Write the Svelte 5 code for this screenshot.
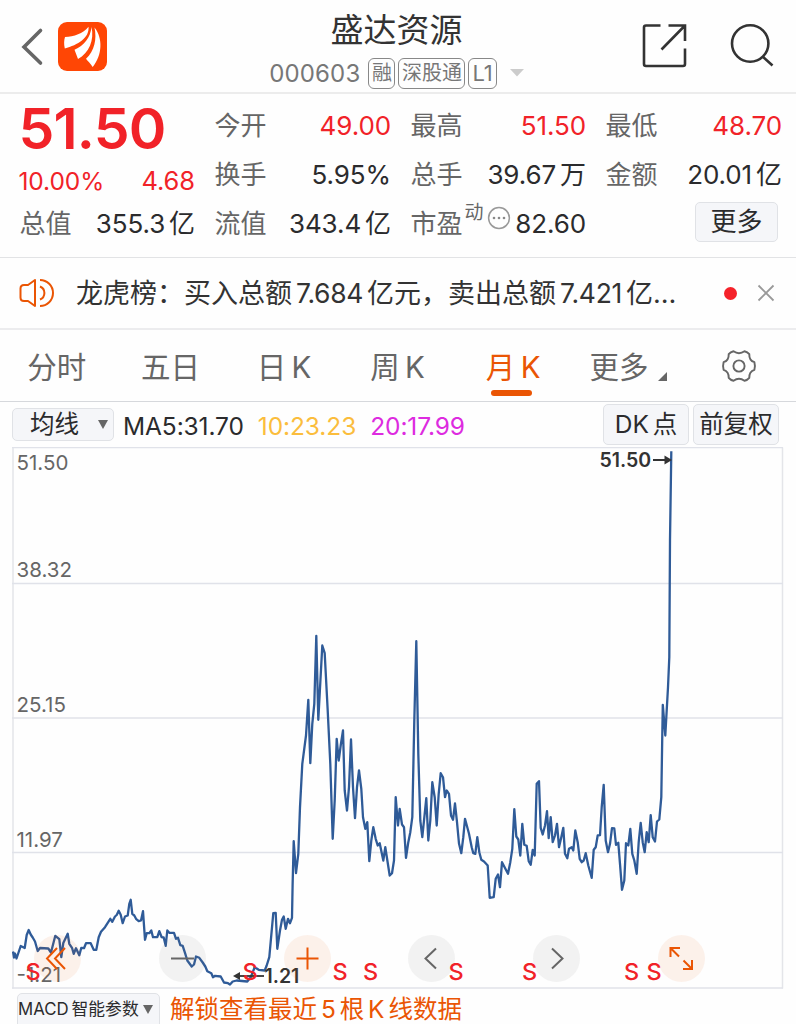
<script>
  const stats = [
    { label: '今开', value: '49.00', up: true },
    { label: '最高', value: '51.50', up: true },
    { label: '最低', value: '48.70', up: true },
    { label: '换手', value: '5.95%' },
    { label: '总手', value: '39.67', unit: '万' },
    { label: '金额', value: '20.01', unit: '亿' },
    { label: '总值', value: '355.3', unit: '亿' },
    { label: '流值', value: '343.4', unit: '亿' }
  ]

  const tabs = ['分时', '五日', '日 K', '周 K', '月 K']
  let active = $state('月 K')

  const gridLines = [
    { y: 447, label: '51.50', ty: 469 },
    { y: 583, label: '38.32', ty: 576 },
    { y: 717.5, label: '25.15', ty: 711 },
    { y: 852, label: '11.97', ty: 846 },
    { y: 987.5, label: '-1.21', ty: 981 }
  ]

  const signals = [33, 250, 340, 370.5, 456, 529.5, 631.5, 654]

  const tools = [
    { name: 'first', warm: true, d: 'M23 13 L13 23.5 L23 34 M31 13 L21 23.5 L31 34' },
    { name: 'zoom out', d: 'M12 23.5 H35' },
    { name: 'zoom in', warm: true, d: 'M12.5 23.5 H34.5 M23.5 12.5 V34.5' },
    { name: 'previous', d: 'M28 13.5 L17.5 23.5 L28 33.5' },
    { name: 'next', d: 'M19 13.5 L29.5 23.5 L19 33.5' },
    { name: 'expand', warm: true, d: 'M12.5 22 V13 H22 M13 13.5 L21 21.5 M34 25 V34 H25 M33.5 33.5 L25.5 25.5' }
  ]

  const line = `13,951 14,957 15,953 16.5,958 20.7,945.5 24.7,947.5 26.7,934.5 28.7,929.5 30.7,934 32.7,937 35,941
    37.7,950.5 40,947.5 48.3,948 51,952 53.3,943 55.3,935.3 59.3,938.7 61.3,956.5 63.3,942.5 67.7,933.3 69.3,943.3
    72,947.3 73.7,953.3 76,947.7 79.3,954.7 81.3,947.3 84,947.7 86,942.7 90.7,942.7 93.7,949.3 96.3,949.3 98.7,936.7
    101,931.3 105,926.7 110.3,918.3 112.3,921.3 115,916 116.7,914.5 118.7,910.3 120.7,914.3 122.7,922.7 125,916
    127.7,915 129.3,903.3 130.7,899.3 132.3,913.3 134.3,915 136.3,918.7 138.7,920.7 141,920 143,910.7 145,939.3
    146.7,932.7 149.3,932.7 151.3,930 153,936.7 157.3,936.7 159.3,930.7 161.7,936.7 163.7,937 165.7,945.3 167.3,930
    169.3,932.3 174,932.3 176,938.3 178,937.3 180.3,944.7 182.7,945.3 185.3,953.3 187.3,960 191.7,966 194,964
    196,956 199.3,957.3 202.7,962 205.3,966 207.3,970.7 211.3,972.7 213,976.7 215,975.3 220.7,976 224,982 228,982.7
    230,984 232.7,981 236.7,980 247.3,981 250.7,976.7 254.7,966.7 258.7,969.3 264.7,970 266.7,965 269.3,956.7
    273.3,912.7 275.7,912.3 277.3,948.3 280,930 282,919.3 283.7,916 285.7,928.3 288,918.3 290,922.7 292,917.3
    292.6,885 293.7,840.7 296,872.7 298.3,853.3 300,806.7 302.3,763.3 306,735 308.3,699.3 310.3,762.7 312.3,723.3
    314.3,703.3 316.3,635.3 318.3,719.3 322.3,645 324.7,652.7 327.7,710 330.3,763.3 332.7,838.3 334.7,800
    336.7,738.3 338.7,760 340.7,745 343,730 344.7,790 347,810 349,786.7 351,739 353,786.7 355,817.7 357,786.7
    359,770 361.3,788.3 363,816.7 365.3,828.3 367.3,821.7 369.3,860.7 371.3,840 373.3,826.7 375.7,838.3 377.7,845
    379.7,842.7 383.3,860 385.3,846.7 389.7,875 392,872.7 394,860 395.7,796.7 398,825 399.7,808.3 402,824 404,826.7
    406,857.3 408.3,841.7 410.3,831.7 412.3,816.7 414.3,720 416.3,640.7 418.3,753.3 420.3,820 422.3,836.7
    426.3,797.7 428.3,840 430.3,820 432.3,781.7 434.7,796.7 436.7,825 438.7,793.3 440.7,772.7 443,776.7 445,796.7
    446.7,790 449,793.3 451,815 453,819.3 455,803 457,821.7 459,843 461.3,852.7 463.3,836.7 465,818.3 469,833.3
    471.7,846.7 473.3,852.7 475.3,853.3 477.3,836.7 479.3,851.7 481.3,859.3 484,861 487.7,865 489.7,897.3
    493.7,896.7 495.7,878.3 498,874 500,886.7 502,861.7 508,873.3 510.3,861.7 512.3,848.3 514.3,808.7 516.3,836
    518.3,839 520.3,855 522.3,823.3 524.3,844.3 526.7,845.3 528.7,860.7 530.7,864.3 532.7,849.3 534.7,855
    536.7,783.3 539,780.7 540.7,827.3 542.7,834 545,825 547,810.7 548.7,837.7 550.7,816.7 552.7,841.7 555,835
    557,823.3 559,846.7 561.3,836.7 563.3,827.3 565,853.3 567.3,857.7 569,848.3 571.7,846.7 573.3,850 575.3,830
    577.7,841.7 579.7,858.3 581.7,861.7 583.7,860 585.7,852.7 588.3,865 591.7,877.3 593.7,849.3 595.7,846.7
    597.7,835 600,834.7 601.7,806.7 603.7,784.3 605.7,840 608,851.7 610,843.3 612,827.7 614.3,828 616,844.3
    618.3,842.3 620,863.3 622,889.3 624.3,880 626,842.7 628.3,845 630.3,828.3 632.3,853.3 634.3,860 636.7,873.3
    638.7,841.7 640.7,822.3 642.7,841.7 644.7,851.7 646.7,831.7 648.7,841.7 650.7,814.7 652.7,836.7 655,841
    657,821 659.3,819 661.3,796.7 662.2,740 662.8,704.3 665.3,735 668,686.7 669.3,656.7 670,540 671.3,450.7`
</script>

<main>
  <header>
    <div class="left">
      <svg width="24" height="40" viewBox="0 0 24 40"><path d="M20.5 4.5 L4 21 L20.5 37" fill="none" stroke="#666" stroke-width="3.6" stroke-linecap="round" /></svg>
      <svg class="logo" width="49" height="49" viewBox="0 0 49 49">
        <rect width="49" height="49" rx="9" fill="#ff4605" />
        <g fill="#fff">
          <path d="M7 15 C16 14.5 25 12 30.5 4.8 C31.5 16 20 23 6.8 26.5 C5.8 22 6 18 7 15 Z" />
          <path d="M33.5 5 C36.5 18 31 31 20 37 L16.5 27.8 C26 23.5 32.5 15.5 33.5 5 Z" />
          <path d="M36.5 5.5 C45 16 44.5 33 34.7 45 C32.5 41.5 29.5 39 28 36.8 C36.5 29 39 17 36.5 5.5 Z" />
        </g>
      </svg>
    </div>
    <div class="title">
      <h1>盛达资源</h1>
      <div class="code">
        <span class="num">000603</span>
        <i>融</i><i>深股通</i><i class="level">L1</i>
        <svg width="14" height="8" viewBox="0 0 14 8"><path d="M0 0 H14 L7 7.5 Z" fill="#ccc" /></svg>
      </div>
    </div>
    <div class="right">
      <svg width="46" height="46" viewBox="0 0 46 46" fill="none" stroke="#333" stroke-width="2.6">
        <path d="M18.5 2.5 H4 Q2 2.5 2 4.5 V41 Q2 43 4 43 H41 Q43 43 43 41 V25.5 M26.5 2.5 H43 V18 M43 2.5 L19.5 26.5" />
      </svg>
      <svg width="46" height="46" viewBox="0 0 46 46" fill="none" stroke="#333" stroke-width="2.6">
        <circle cx="20.2" cy="20.5" r="18.2" /><path d="M32.5 33.5 L42.5 42.5" />
      </svg>
    </div>
  </header>

  <section class="quote">
    <div class="price">
      <strong>51.50</strong>
      <p><span>10.00%</span><span>4.68</span></p>
    </div>
    {#each stats as s}
      <div class="stat">
        <label>{s.label}</label>
        <span class="val" class:up={s.up}>{s.value}{#if s.unit}<b>{s.unit}</b>{/if}</span>
      </div>
    {/each}
    <div class="stat">
      <label>市盈</label>
      <small>动</small>
      <svg class="dots" width="24" height="24" viewBox="0 0 24 24"><circle cx="12" cy="12" r="10.4" fill="none" stroke="#999" stroke-width="1.5" /><g fill="#888"><circle cx="7" cy="12" r="1.3" /><circle cx="12" cy="12" r="1.3" /><circle cx="17" cy="12" r="1.3" /></g></svg>
      <span class="val">82.60</span>
    </div>
    <button class="more">更多</button>
  </section>

  <section class="news">
    <svg width="36" height="32" viewBox="0 0 36 32" fill="none" stroke="#ea5504" stroke-width="2">
      <path d="M16 3 L9 8 H5 Q1.5 8 1.5 11.5 V20.5 Q1.5 24 5 24 H9 L16 29 Z" stroke-linejoin="round" />
      <path d="M21 9.5 A7 7 0 0 1 21 22.5 M21 3 A13 13 0 0 1 21 29" />
    </svg>
    <p>龙虎榜：买入总额<b>7.684</b>亿元，卖出总额<b>7.421</b>亿…</p>
    <span class="dot"></span>
    <svg width="18" height="18" viewBox="0 0 18 18"><path d="M1.5 1.5 L16.5 16.5 M16.5 1.5 L1.5 16.5" stroke="#999" stroke-width="1.8" /></svg>
  </section>

  <nav>
    {#each tabs as tab}
      <button class="tab" class:active={tab === active} onclick={() => (active = tab)}>{tab}</button>
    {/each}
    <button class="tab wide">更多<svg width="9" height="9" viewBox="0 0 9 9"><path d="M9 0 V9 H0 Z" fill="#666" /></svg></button>
    <svg class="gear" width="36" height="34" viewBox="-18 -17 36 34" fill="none" stroke="#666" stroke-width="1.9">
      <path d="M-5.5 -14.7 Q0 -10.8 5.5 -14.7 Q8.5 -14 10.3 -11.8 Q10 -5.6 15.4 -3.8 Q16.5 0 15.4 3.8 Q10 5.6 10.3 11.8 Q8.5 14 5.5 14.7 Q0 10.8 -5.5 14.7 Q-8.5 14 -10.3 11.8 Q-10 5.6 -15.4 3.8 Q-16.5 0 -15.4 -3.8 Q-10 -5.6 -10.3 -11.8 Q-8.5 -14 -5.5 -14.7 Z" stroke-linejoin="round" />
      <circle r="5.6" />
    </svg>
  </nav>

  <div class="averages">
    <button class="select">均线<svg width="10" height="9" viewBox="0 0 10 9"><path d="M0 0 H10 L5 9 Z" fill="#666" /></svg></button>
    <span class="ma5">MA5:31.70</span>
    <span class="ma10">10:23.23</span>
    <span class="ma20">20:17.99</span>
    <button class="dk">DK 点</button>
    <button class="fq">前复权</button>
  </div>

  <div class="chart">
    <svg width="772" height="542" viewBox="12 446.5 772 542">
      <path d="M13 447 V988 M782.5 447 V988" stroke="#e4e5e9" stroke-width="1.5" />
      {#each gridLines as g}
        <line x1="12" x2="783" y1={g.y} y2={g.y} stroke="#e0e2e9" stroke-width="1.7" />
        <text class="axis" x="16.5" y={g.ty}>{g.label}</text>
      {/each}
      <polyline points={line} fill="none" stroke="#2f5b98" stroke-width="2.3" stroke-linejoin="round" />
      <text class="mark" x="599.5" y="466.5">51.50</text>
      <path d="M653 459.5 H667" stroke="#333" stroke-width="2" /><path d="M664.5 455 L672 459.5 L664.5 464 Z" fill="#333" />
      <path d="M238 975.5 H264" stroke="#333" stroke-width="1.8" /><path d="M240 971.5 L233 975.5 L240 979.5 Z" fill="#333" />
      <text class="mark" x="264.5" y="982.5">1.21</text>
    </svg>
    <div class="tools">
      {#each tools as t}
        <button class:warm={t.warm} aria-label={t.name}>
          <svg width="47" height="47" viewBox="0 0 47 47"><path d={t.d} fill="none" stroke="currentColor" stroke-width="2" /></svg>
        </button>
      {/each}
    </div>
    <svg class="signals" width="772" height="542" viewBox="12 446.5 772 542">
      {#each signals as x}
        <text {x} y="979.3" text-anchor="middle">S</text>
      {/each}
    </svg>
  </div>

  <footer>
    <button>MACD<span>智能参数</span><svg width="10" height="9" viewBox="0 0 10 9"><path d="M0 0 H10 L5 9 Z" fill="#666" /></svg></button>
    <p>解锁查看最近 5 根 K 线数据</p>
  </footer>
</main>

<style>
  :global(body) {
    background: #fff;
    overflow: hidden;
  }

  main {
    width: 796px;
    height: 1024px;
    overflow: hidden;
    background: #fefefe;
    color: #2b2b2d;
    font-family: Inter, "Noto Sans CJK SC", sans-serif;
  }

  main * {
    box-sizing: border-box;
  }

  h1, p {
    margin: 0;
    font-weight: 400;
  }

  b, i, small {
    font-weight: 400;
    font-style: normal;
  }

  button {
    font: inherit;
    color: inherit;
    padding: 0;
    border: 1.5px solid #e0e2e6;
    border-radius: 5px;
    background: #f5f6f9;
    white-space: nowrap;
  }

  svg {
    display: block;
    flex: none;
  }

  header {
    height: 94px;
    display: grid;
    grid-template-columns: 200px 1fr 200px;
    border-bottom: 2px solid #ececec;
  }

  .left {
    display: flex;
    align-items: center;
    padding-left: 20px;
    gap: 14px;
  }

  .title {
    display: flex;
    flex-direction: column;
    align-items: center;
    padding-right: 3px;
  }

  h1 {
    font-size: 33px;
    line-height: 40px;
    margin-top: 10px;
    color: #333;
  }

  .code {
    display: flex;
    align-items: center;
    height: 32px;
    margin-top: 7px;
    color: #777;
    white-space: nowrap;
  }

  .code .num {
    font-size: 24px;
    letter-spacing: 0.15px;
    margin-right: 8px;
  }

  .code i {
    height: 31px;
    line-height: 28px;
    padding: 0 2.5px;
    margin-right: 3px;
    font-size: 20px;
    border: 1.5px solid #888;
    border-radius: 6px;
  }

  .code .level {
    font-size: 22px;
    padding: 0 3px;
  }

  .code svg {
    margin-left: 10px;
  }

  .right {
    display: flex;
    align-items: center;
    gap: 42px;
    padding-left: 46px;
  }

  .quote {
    height: 164px;
    padding: 7px 14px 0 20px;
    display: grid;
    grid-template-columns: 175px 176px 175px 176px;
    grid-template-rows: repeat(3, 49px);
    column-gap: 20px;
    border-bottom: 1.5px solid #e2e3e5;
  }

  .price {
    grid-row: span 2;
    margin-left: -1.5px;
    color: #f12228;
  }

  .price strong {
    display: block;
    font-size: 57px;
    font-weight: 600;
    line-height: 56px;
    letter-spacing: -0.8px;
  }

  .price p {
    display: flex;
    justify-content: space-between;
    font-size: 24.5px;
    line-height: 30px;
    margin-top: 9px;
    letter-spacing: -0.1px;
  }

  .price p span:last-child {
    font-size: 25.5px;
  }

  .stat {
    display: flex;
    align-items: center;
    font-size: 26px;
    line-height: 49px;
    white-space: nowrap;
  }

  .stat label {
    color: #666;
    margin-left: -0.5px;
  }

  .stat .val {
    margin-left: auto;
    letter-spacing: -0.1px;
  }

  .stat b {
    margin-left: 4px;
  }

  .up {
    color: #f12228;
  }

  .stat small {
    font-size: 19px;
    color: #666;
    position: relative;
    top: -11px;
    margin-left: 2px;
  }

  .dots {
    margin: -12px 0 0 3px;
  }

  .more {
    width: 83px;
    height: 40px;
    font-size: 26px;
    line-height: 34px;
    justify-self: end;
    align-self: center;
    margin: -4px 4px 0 0;
  }

  .news {
    height: 72px;
    display: flex;
    align-items: center;
    padding-left: 19px;
    border-bottom: 2px solid #ececee;
  }

  .news p {
    width: 625px;
    margin: -3px 0 0 21px;
    font-size: 27px;
    color: #333;
    white-space: nowrap;
  }

  .news b {
    margin: 0 4px;
    font-size: 26.5px;
    letter-spacing: -0.3px;
  }

  .dot {
    width: 13px;
    height: 13px;
    flex: none;
    border-radius: 50%;
    background: #f5222a;
    margin: 0 20px 0 23px;
  }

  nav {
    height: 72px;
    display: flex;
    align-items: center;
    border-bottom: 1.5px solid #d6d8dc;
  }

  .tab {
    width: 113.6px;
    height: 70px;
    padding-bottom: 2px;
    border: 0;
    background: none;
    font-size: 29.5px;
    color: #666;
    display: flex;
    align-items: center;
    justify-content: center;
    position: relative;
    word-spacing: -3px;
  }

  .tab.active {
    color: #ea5504;
    padding-left: 4px;
  }

  .tab.active::after {
    content: '';
    position: absolute;
    left: 36.5px;
    bottom: 5px;
    width: 41px;
    height: 6px;
    border-radius: 3px;
    background: #ea5504;
  }

  .tab.wide {
    width: 121px;
  }

  .tab svg {
    margin: 23px 0 0 10px;
  }

  .gear {
    margin-left: 32px;
  }

  .averages {
    height: 44.5px;
    display: flex;
    align-items: center;
    padding: 0 17px 0 12px;
    font-size: 24.5px;
    white-space: nowrap;
  }

  .averages span {
    padding-top: 3px;
    letter-spacing: -0.1px;
  }

  .select {
    width: 102px;
    height: 33px;
    line-height: 28px;
    display: flex;
    align-items: center;
    justify-content: space-between;
    padding: 0 5px 0 17px;
  }

  .ma5 {
    margin-left: 9px;
  }

  .ma10 {
    color: #fbbd3c;
    margin-left: 14px;
  }

  .ma20 {
    color: #dd2be0;
    margin-left: 14px;
  }

  .dk, .fq {
    height: 41px;
    line-height: 36px;
    margin-left: auto;
    width: 86px;
    word-spacing: -3px;
  }

  .fq {
    margin-left: 4px;
  }

  .chart {
    position: relative;
    margin-left: 12px;
    height: 542px;
  }

  .axis {
    font-size: 20.5px;
    fill: #666;
  }

  .mark {
    font-size: 19.5px;
    font-weight: 600;
    fill: #333;
  }

  .tools {
    position: absolute;
    left: 22px;
    top: 488px;
    width: 671px;
    display: flex;
    justify-content: space-between;
  }

  .tools button {
    width: 47px;
    height: 47px;
    border: 0;
    border-radius: 50%;
    background: rgba(120, 120, 120, 0.09);
    color: #666;
  }

  .tools .warm {
    background: rgba(234, 85, 4, 0.08);
    color: #ea5504;
  }

  .signals {
    position: absolute;
    left: 0;
    top: 0;
    pointer-events: none;
    font-size: 23.5px;
    font-weight: 500;
    fill: #f12228;
  }

  footer {
    display: flex;
    align-items: flex-start;
    padding: 4px 0 0 17px;
    height: 36px;
  }

  footer button {
    width: 143px;
    height: 36px;
    display: flex;
    align-items: center;
    padding-bottom: 3px;
    font-size: 16.8px;
    line-height: 30px;
  }

  footer button span {
    margin-left: 3px;
  }

  footer button svg {
    margin-left: 4px;
  }

  footer p {
    margin-left: 10px;
    font-size: 24.5px;
    line-height: 32px;
    color: #ea5504;
    white-space: nowrap;
    word-spacing: -3px;
  }
</style>
